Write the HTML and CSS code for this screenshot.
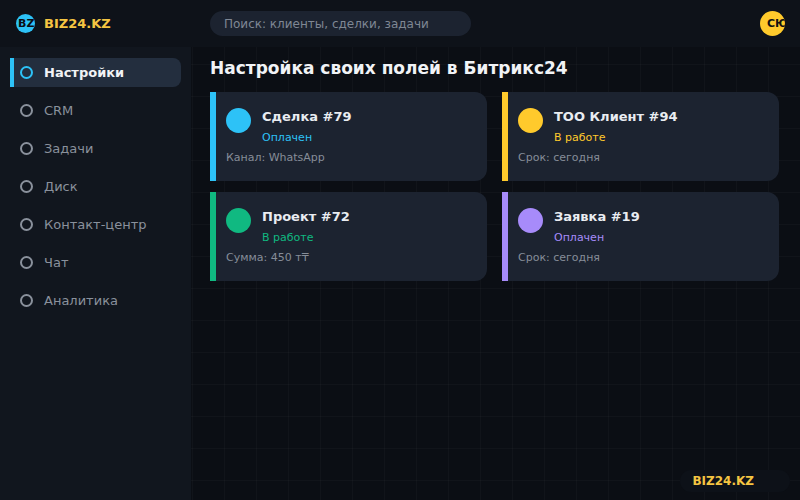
FILE: index.html
```html
<!DOCTYPE html>
<html lang="ru">
<head>
<meta charset="utf-8">
<title>BIZ24.KZ</title>
<link rel="stylesheet" href="styles.css">
</head>
<body>
<div class="app">
  <header class="topbar">
    <div class="brand">
      <span class="brand-badge"><span class="brand-badge-text">BZ</span></span>
      <span class="brand-name">BIZ24.KZ</span>
    </div>
    <div class="search">Поиск: клиенты, сделки, задачи</div>
    <div class="avatar">СЮ</div>
  </header>
  <div class="body">
    <nav class="sidebar">
      <div class="nav-item active"><span class="ring"></span>Настройки</div>
      <div class="nav-item"><span class="ring"></span>CRM</div>
      <div class="nav-item"><span class="ring"></span>Задачи</div>
      <div class="nav-item"><span class="ring"></span>Диск</div>
      <div class="nav-item"><span class="ring"></span>Контакт-центр</div>
      <div class="nav-item"><span class="ring"></span>Чат</div>
      <div class="nav-item"><span class="ring"></span>Аналитика</div>
    </nav>
    <main class="main">
      <h1 class="title">Настройка своих полей в Битрикс24</h1>
      <div class="cards">
        <article class="card blue">
          <div class="card-head">
            <span class="dot"></span>
            <div>
              <div class="card-title">Сделка #79</div>
              <div class="card-status">Оплачен</div>
            </div>
          </div>
          <div class="card-meta">Канал: WhatsApp</div>
        </article>
        <article class="card yellow">
          <div class="card-head">
            <span class="dot"></span>
            <div>
              <div class="card-title">ТОО Клиент #94</div>
              <div class="card-status">В работе</div>
            </div>
          </div>
          <div class="card-meta">Срок: сегодня</div>
        </article>
        <article class="card green">
          <div class="card-head">
            <span class="dot"></span>
            <div>
              <div class="card-title">Проект #72</div>
              <div class="card-status">В работе</div>
            </div>
          </div>
          <div class="card-meta">Сумма: 450 т₸</div>
        </article>
        <article class="card purple">
          <div class="card-head">
            <span class="dot"></span>
            <div>
              <div class="card-title">Заявка #19</div>
              <div class="card-status">Оплачен</div>
            </div>
          </div>
          <div class="card-meta">Срок: сегодня</div>
        </article>
      </div>
    </main>
  </div>
  <div class="watermark">BIZ24.KZ</div>
</div>
</body>
</html>
```

FILE: styles.css
```css
* { box-sizing: border-box; }
html, body { margin: 0; height: 100%; }
body {
  font-family: "DejaVu Sans", sans-serif;
  background-color: #0b0e14;
  background-image:
    linear-gradient(rgba(255,255,255,0.025) 1px, transparent 1px),
    linear-gradient(90deg, rgba(255,255,255,0.025) 1px, transparent 1px);
  background-size: 32px 32px;
  overflow: hidden;
}
.app { position: relative; width: 800px; height: 500px; display: flex; flex-direction: column; }
.topbar {
  height: 47px; flex: none; display: flex; align-items: center;
  padding: 0 15px 0 16px; background: #0e1219;
}
.brand { width: 194px; display: flex; align-items: center; gap: 9px; flex: none; }
.brand-badge {
  width: 19px; height: 19px; border-radius: 50%; background: #2dc2f7; color: #0b0e14;
  font-size: 11px; font-weight: 700; display: flex; align-items: center; overflow: hidden; flex: none;
  white-space: nowrap; padding-left: 2px;
}
.brand-badge-text { flex: none; }
.brand-name { color: #f5c542; font-size: 13px; font-weight: 700; }
.search {
  width: 261px; height: 25px; border-radius: 12.5px; background: #1c2330; color: #7f8794;
  font-size: 12px; display: flex; align-items: center; padding: 0 14px;
}
.avatar {
  margin-left: auto; width: 25px; height: 25px; border-radius: 50%;
  background: #ffca2c; color: #111; font-size: 11px; font-weight: 700;
  display: flex; align-items: center; padding-left: 7px; overflow: hidden; white-space: nowrap; flex: none;
}
.body { flex: 1; display: flex; min-height: 0; }
.sidebar {
  width: 191px; flex: none; background: #11161e; padding: 11px 10px;
  display: flex; flex-direction: column; gap: 9px;
}
.nav-item {
  height: 29px; display: flex; align-items: center; gap: 11px; padding-left: 6px;
  color: #8a919c; font-size: 13px; border-left: 4px solid transparent;
  border-radius: 0 8px 8px 0;
}
.nav-item.active { background: #232e3e; border-left-color: #2dc2f7; color: #f1f3f6; font-weight: 700; }
.ring { width: 13px; height: 13px; border-radius: 50%; border: 2px solid #8a919c; flex: none; }
.active .ring { border-color: #2dc2f7; }
.main { flex: 1; padding: 11px 21px 0 19px; min-width: 0; }
.title { margin: 0 0 14px; font-size: 17px; line-height: 20px; font-weight: 700; color: #f1f3f6; }
.cards { display: grid; grid-template-columns: 277px 277px; column-gap: 15px; row-gap: 11px; }
.card {
  height: 89px; background: #1c2330; border-left: 6px solid; border-radius: 0 12px 12px 0;
  padding: 16px 10px;
}
.card-head { display: flex; gap: 11px; }
.dot { width: 25px; height: 25px; border-radius: 50%; flex: none; background: currentColor; }
.card-title { color: #e9ecf1; font-size: 13px; line-height: 17px; font-weight: 700; }
.card-status { font-size: 11px; line-height: 13px; margin-top: 6px; color: currentColor; }
.card-meta { color: #868d98; font-size: 11px; line-height: 13px; margin-top: 7px; }
.blue { border-color: #2dc2f7; color: #2dc2f7; }
.yellow { border-color: #ffca2c; color: #ffca2c; }
.green { border-color: #10b981; color: #10b981; }
.purple { border-color: #a78bfa; color: #a78bfa; }
.watermark {
  position: absolute; right: 10px; bottom: 8px; padding: 4px 36px 4px 12px; border-radius: 12px;
  background: #0d1118; color: #f5c542; font-size: 12px; font-weight: 700;
}
```
